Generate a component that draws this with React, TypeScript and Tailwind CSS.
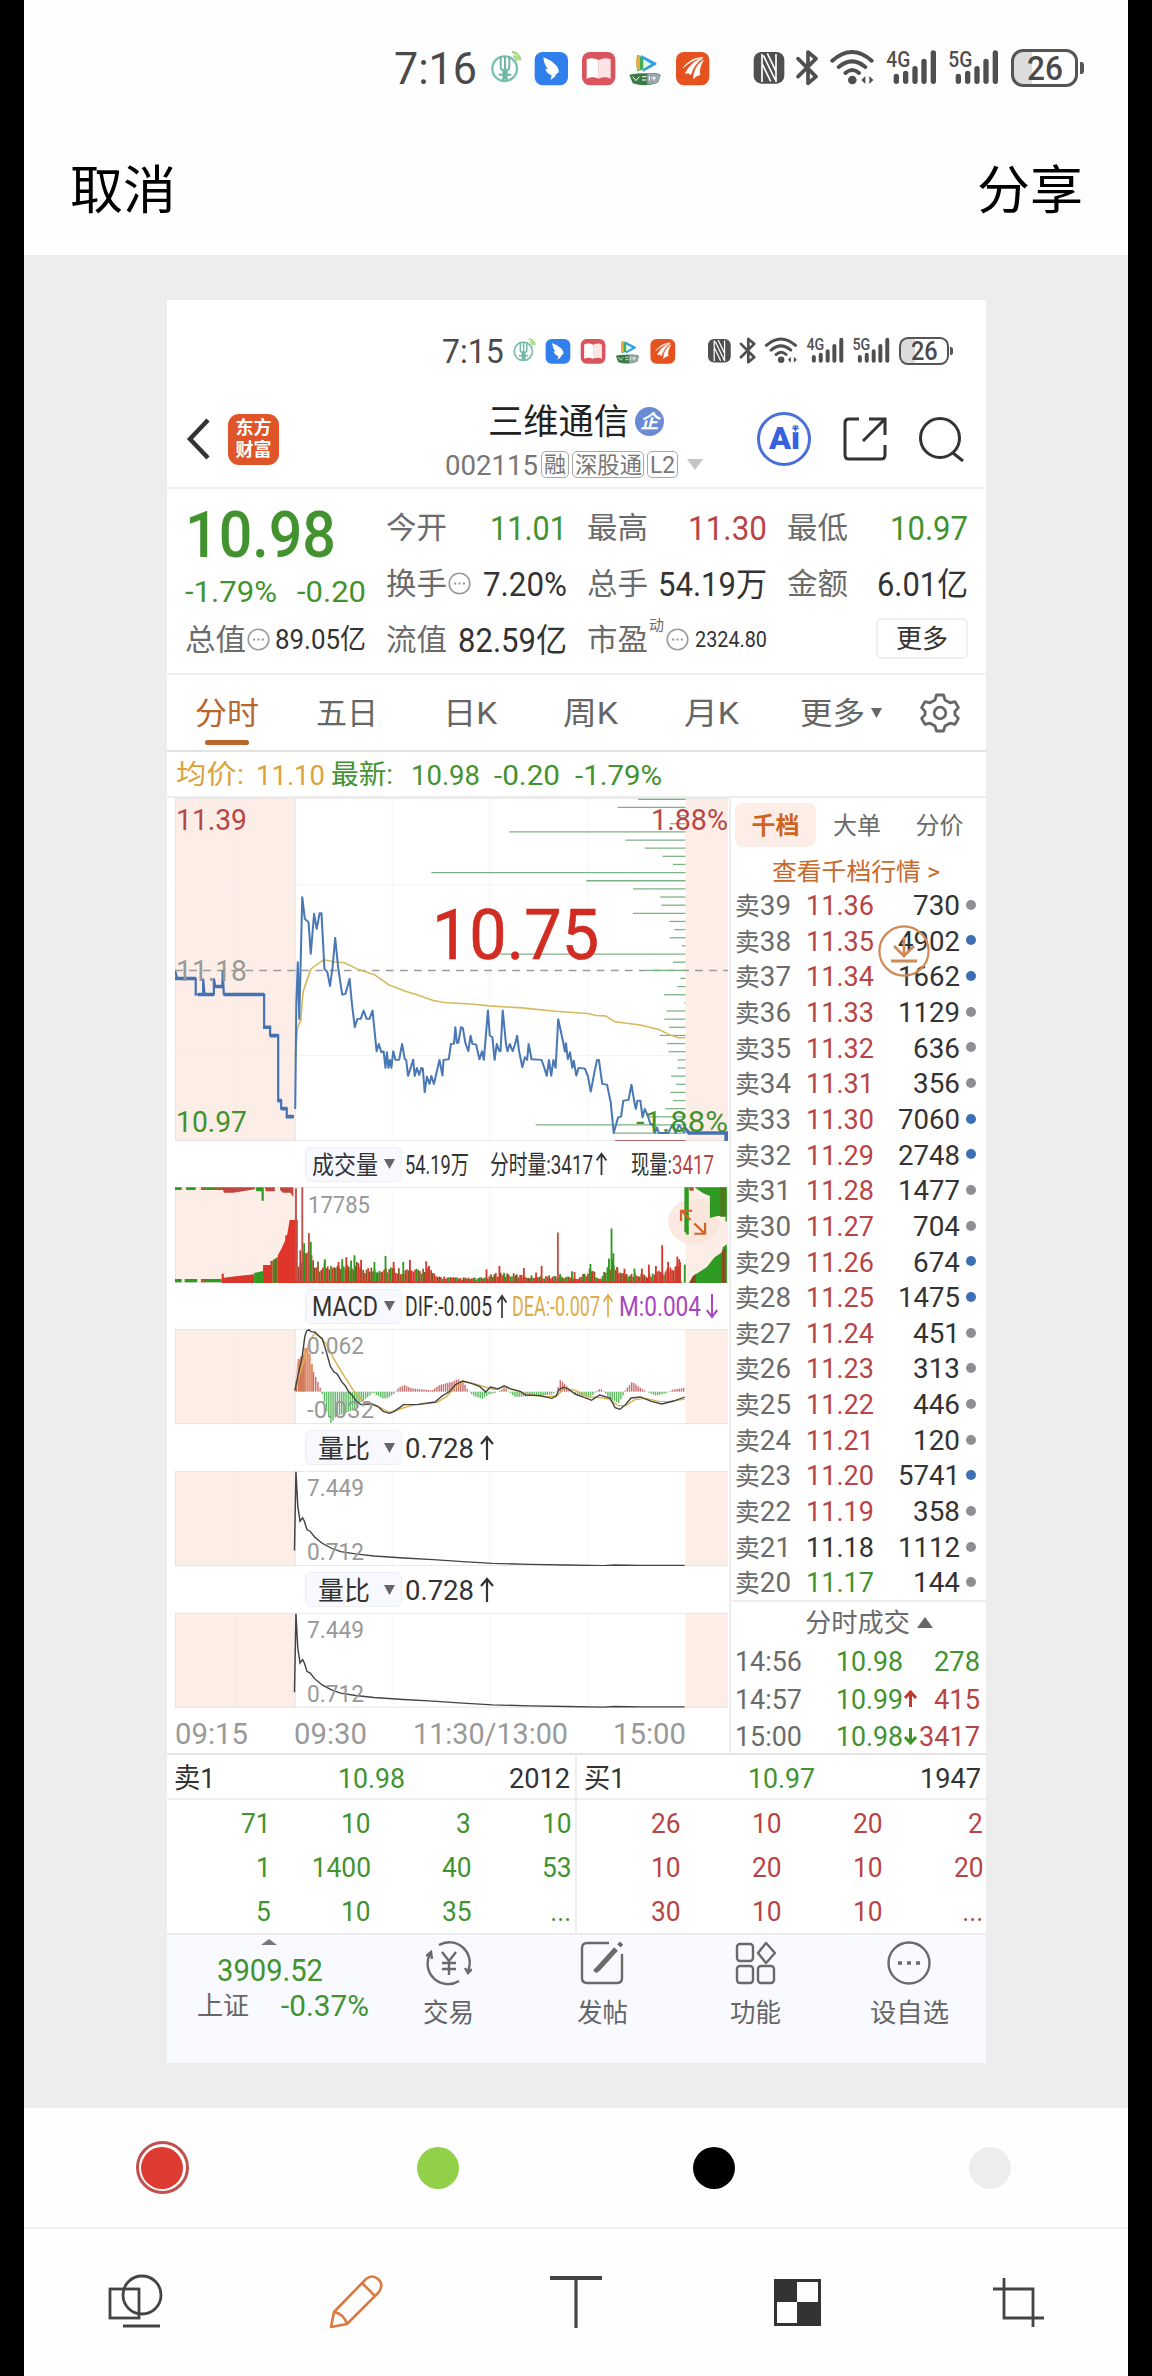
import React, { useLayoutEffect, useRef, useState } from "react";

/* Text squeezed or stretched horizontally to the width of its box. */
function Fit({ className, children }: { className: string; children: React.ReactNode }) {
  const outer = useRef<HTMLSpanElement>(null);
  const inner = useRef<HTMLSpanElement>(null);
  const [scale, setScale] = useState(1);
  useLayoutEffect(() => {
    if (!outer.current || !inner.current) return;
    const o = parseFloat(getComputedStyle(outer.current).width);
    const i = parseFloat(getComputedStyle(inner.current).width);
    if (i > 0) setScale(o / i);
  }, [children]);
  return (
    <span ref={outer} className={`block shrink-0 ${className}`}>
      <span ref={inner} className="inline-block origin-left pt-[0.08em] whitespace-nowrap" style={{ transform: `scaleX(${scale})` }}>
        {children}
      </span>
    </span>
  );
}

function StatusBar({ time }: { time: string }) {
  return (
    <div className="flex h-[50px] items-center text-[#4a4a4a]">
      <Fit className="mb-[3px] ml-[370px] w-[83px] text-[45px]">{time}</Fit>
      <svg className="ml-[7px] h-[48px] w-[230px]" viewBox="0 0 690 144">
        <circle cx="62" cy="74" r="37" fill="none" stroke="#7cc0b0" strokeWidth="7" />
        <path d="M50 36v34q0 8 8 8v32M76 36v34q0 8-8 8v32M63 36v70M44 92h38" fill="none" stroke="#6fb8a6" strokeWidth="6" />
        <path d="M84 24q16 0 26 24M88 36q10 2 12 14" fill="none" stroke="#a5dc7c" strokeWidth="8" />
        <rect x="152" y="24" width="100" height="100" rx="24" fill="#2f80ec" />
        <path d="M178 40q22 8 34 20 16 14 11 26l-9 6 1 4-15 12 3-14q-16-6-19-20l8 2q-12-14-14-36z" fill="#fff" />
        <rect x="294" y="24" width="100" height="100" rx="24" fill="#d9545c" />
        <path d="M308 46q18-8 36 2v56q-18-8-36 0z" fill="#fff" />
        <path d="M380 46q-18-8-36 2v56q18-8 36 0z" fill="#fbe4e4" />
        <path d="M460 32q-6 24 0 50l34-10 22-14z" fill="#3fae55" />
        <path d="M458 40q-4 18 2 36l8 4V34z" fill="#f2a93a" />
        <path d="M470 32l46 24q4 4 0 6l-40 22q10-24-6-52z" fill="#2f9fe8" />
        <path d="M478 46l24 14-24 14z" fill="#e8ffe0" />
        <path d="M436 92q20-6 48-4 40-4 46 6l-8 22q-40 14-76 2z" fill="#3d7a45" />
        <path d="M490 88q30-2 40 6l-8 22-32 6z" fill="#98a6ac" />
        <path d="M446 98l10 12 10-12m8 0h14m-14 10h14m8-12v14m14-14v14m-8-8h14" fill="none" stroke="#fff" strokeWidth="3" />
        <rect x="576" y="24" width="100" height="100" rx="24" fill="#e5511f" />
        <path d="M597 72q22-30 58-32-34 8-58 32zM604 88q18-36 52-46-26 18-36 50-6-8-16-4zM628 104q2-36 30-56-16 30-10 44-10 2-20 12z" fill="#fff" stroke="#fff" strokeWidth="2" />
      </svg>
      <svg className="ml-[37px] h-[48px] w-[250px]" viewBox="803 0 750 144">
        <rect x="811" y="24" width="92" height="95" rx="24" fill="#4f4f4f" />
        <path d="M836 30v84M878 30v84M840 34l36 74M852 28l26 54M836 58l26 54" stroke="#fff" strokeWidth="5" fill="none" />
        <path d="M944 44l54 54-24 20V24l24 20-54 54" fill="none" stroke="#4f4f4f" strokeWidth="11" strokeLinejoin="round" strokeLinecap="round" />
        <g fill="none" stroke="#4f4f4f" strokeWidth="12" strokeLinecap="round">
          <path d="M1047 50q59-52 118 0" />
          <path d="M1066 69q40-34 80 0" />
          <path d="M1086 87q21-18 41 0" />
        </g>
        <circle cx="1107" cy="108" r="13" fill="#4f4f4f" />
        <path d="M1134 108l12-12v24zM1170 108l-12-12v24z" fill="#4f4f4f" />
        {[0, 186].map((dx) => (
          <g key={dx} stroke="#4f4f4f" strokeWidth="16" strokeLinecap="round">
            <path d={`M${1239 + dx} 97V112M${1267 + dx} 88V112M${1295 + dx} 74V112M${1322 + dx} 52V112M${1350 + dx} 27V112`} />
          </g>
        ))}
        <text x="1209" y="68" fontSize="66" fontWeight="500" textLength="72" lengthAdjust="spacingAndGlyphs" fill="#4f4f4f">4G</text>
        <text x="1395" y="68" fontSize="66" fontWeight="500" textLength="72" lengthAdjust="spacingAndGlyphs" fill="#4f4f4f">5G</text>
      </svg>
      <div className="ml-[10px] flex h-[38px] w-[67px] items-center justify-center rounded-[12px] border-[3px] border-[#555] bg-linear-to-r from-[#dcdcdc] from-30% to-white to-30%">
        <Fit className="mb-[2px] w-[36px] text-[34px] font-medium">26</Fit>
      </div>
      <div className="ml-[2px] h-[12px] w-[4px] rounded-r-[3px] bg-[#555]" />
    </div>
  );
}

function Dots({ className }: { className: string }) {
  return (
    <svg className={`size-[23px] shrink-0 ${className}`} viewBox="0 0 23 23" fill="none" stroke="#9a9a9a">
      <circle cx="11.5" cy="11.5" r="10.3" strokeWidth="1.6" />
      <path d="M6 11.5h2.2M10.4 11.5h2.2M14.8 11.5H17" strokeWidth="2.2" />
    </svg>
  );
}

function Quote() {
  return (
    <div className="grid h-[186px] grid-cols-4 gap-x-5 border-b-2 border-[#f0f0f0] pt-[10px] pr-[18px] pl-[18px] text-[30px] text-[#6b6b6b]">
      <div>
        <div className="flex h-[72px] items-center pb-[4px]"><Fit className="w-[151px] text-[65px] font-medium text-[#42932f]">10.98</Fit></div>
        <div className="flex h-[40px] items-center justify-between text-[#42932f]">
          <Fit className="w-[92px]">-1.79%</Fit>
          <Fit className="w-[69px]">-0.20</Fit>
        </div>
        <div className="flex h-[56px] items-center">
          <Fit className="w-[61px]">总值</Fit><Dots className="ml-[1px]" />
          <Fit className="ml-auto w-[91px] text-[28px] text-[#333]">89.05亿</Fit>
        </div>
      </div>
      <div>
        <div className="flex h-[56px] items-center justify-between"><Fit className="w-[61px]">今开</Fit><Fit className="w-[77px] text-[33px] text-[#42932f]">11.01</Fit></div>
        <div className="flex h-[56px] items-center"><Fit className="w-[61px]">换手</Fit><Dots className="ml-[1px]" /><Fit className="ml-auto w-[84px] text-[33px] text-[#333]">7.20%</Fit></div>
        <div className="flex h-[56px] items-center justify-between"><Fit className="w-[61px]">流值</Fit><Fit className="w-[109px] text-[33px] text-[#333]">82.59亿</Fit></div>
      </div>
      <div>
        <div className="flex h-[56px] items-center justify-between"><Fit className="w-[61px]">最高</Fit><Fit className="w-[79px] text-[33px] text-[#b84545]">11.30</Fit></div>
        <div className="flex h-[56px] items-center justify-between"><Fit className="w-[61px]">总手</Fit><Fit className="w-[109px] text-[33px] text-[#333]">54.19万</Fit></div>
        <div className="flex h-[56px] items-center">
          <Fit className="w-[61px]">市盈</Fit>
          <Fit className="mb-[28px] ml-[1px] w-[15px] text-[16px]">动</Fit>
          <Dots className="ml-[2px]" />
          <Fit className="ml-auto w-[72px] text-[22px] text-[#333]">2324.80</Fit>
        </div>
      </div>
      <div>
        <div className="flex h-[56px] items-center justify-between"><Fit className="w-[61px]">最低</Fit><Fit className="w-[78px] text-[33px] text-[#42932f]">10.97</Fit></div>
        <div className="flex h-[56px] items-center justify-between"><Fit className="w-[61px]">金额</Fit><Fit className="w-[91px] text-[33px] text-[#333]">6.01亿</Fit></div>
        <div className="flex h-[54px] items-center justify-end">
          <div className="flex h-[41px] w-[92px] items-center justify-center rounded-[5px] border-2 border-[#f0f0f0] text-[#333]"><Fit className="w-[52px] text-[26px]">更多</Fit></div>
        </div>
      </div>
    </div>
  );
}

const PRICE =
  "367,955 370,640 374,515 378,685 386,320 393,385 403,395 409,490 418,370 425,415 433,368 438,368 446,535 454,545 461,587 468,530 475,442 483,530 494,612 503,610 514,565 520,637 528,710 535,685 544,685 552,660 560,685 568,685 576,660 587,782 593,760 600,785 606,782 611,832 615,785 619,832 623,808 627,832 632,782 638,808 648,808 656,760 663,805 667,808 672,856 679,832 686,807 690,856 696,832 702,853 708,832 712,834 717,905 723,858 730,880 735,856 742,880 750,842 757,808 765,855 768,808 782,806 788,760 796,760 800,710 804,757 808,757 815,710 820,712 827,757 835,782 841,735 846,760 856,762 865,806 872,782 877,808 888,660 893,735 900,740 906,808 912,760 918,780 922,782 928,660 937,762 941,782 947,760 955,782 962,758 967,735 972,780 981,830 988,800 994,808 998,760 1006,806 1033,808 1040,830 1047,856 1053,808 1059,856 1065,808 1071,832 1078,686 1092,758 1096,783 1099,758 1104,806 1110,785 1116,832 1120,810 1127,855 1133,832 1150,834 1158,856 1166,903 1175,850 1183,808 1188,808 1197,880 1210,882 1220,935 1228,1027 1240,980 1248,978 1254,930 1268,928 1276,882 1284,935 1288,955 1292,930 1300,930 1306,980 1312,955 1320,975 1328,1002 1334,1000 1339,1027 1345,1010 1350,1027 1376,1027 1386,1003 1396,1027 1404,1003 1420,1027";
const AVERAGE =
  "367,800 373,712 382,690 388,605 400,565 410,535 425,522 445,508 470,514 500,517 540,538 580,552 620,583 665,602 700,614 740,630 770,636 850,641 890,646 980,652 1070,662 1158,669 1180,675 1205,676 1232,694 1300,703 1350,717 1380,733 1405,742 1422,741";
const PRE_OPEN =
  "42,540 48,564 98,564 98,612 104,612 118,612 118,564 122,612 147,612 147,564 151,588 170,588 171,540 174,612 283,612 283,710 299,710 299,735 321,735 321,930 329,930 329,954 344,954 344,978 363,978";
const DEPTH = [
  1294, 1238, 1400, 1380, 945, 1260, 1312, 1360, 1388, 735, 1154, 1280, 1354, 1357, 1280, 1379, 1392, 1379, 1412, 920, 1388,
  1316, 1408, 1400, 1364, 1419, 1371, 1365, 1378, 1352, 1372, 1376, 1401, 1400, 1383, 1397, 1381, 1388, 1367, 1320, 1017, 1230,
];
const GRID_X = [207, 629, 893, 1158];

function ChartFrame({ top, bottom }: { top: number; bottom: number }) {
  return (
    <g>
      <rect x="42" y={top} width="326" height={bottom - top} fill="#fceee7" />
      <rect x="1422" y={top} width="116" height={bottom - top} fill="#fceee7" />
      {GRID_X.map((x) => (
        <path key={x} d={`M${x} ${top}V${bottom}`} stroke={x === 207 ? "#f4e8e4" : "#efeff2"} strokeWidth="2" />
      ))}
      <path d={`M42 ${top + 1}H1537M42 ${bottom - 1}H1537M43 ${top}V${bottom}M367 ${top}V${bottom}`} stroke="#e4dfe0" strokeWidth="2.5" fill="none" />
    </g>
  );
}

function PriceChart() {
  return (
    <div className="relative h-[343px] w-[553px] text-[30px]">
      <svg className="block size-full" viewBox="42 23 1495 1028" preserveAspectRatio="none">
        <ChartFrame top={23} bottom={1051} />
        <path d="M42 284H1422M42 795H1422" stroke="#efeff2" strokeWidth="2" />
        <path d="M42 540H1537" stroke="#9a9a9a" strokeWidth="4.5" strokeDasharray="21 17" />
        {DEPTH.map((x, i) => (
          <path key={i} d={`M${x} ${27 + i * 24.4}H1422`} stroke="#7db284" strokeWidth="3.8" />
        ))}
        <path d="M1232 1050H1422" stroke="#b5656a" strokeWidth="4" />
        <polyline points={AVERAGE} fill="none" stroke="#d6b85e" strokeWidth="4.6" />
        <polyline points={PRE_OPEN} fill="none" stroke="#4672b4" strokeWidth="6" />
        <path d="M42 564H98M104 612H147M147 588H172M174 612H283M280 710H302M299 735H323M319 930H331M329 954H346M342 978H363" stroke="#4672b4" strokeWidth="11" />
        <polyline points={PRICE} fill="none" stroke="#4a78b5" strokeWidth="5.5" strokeLinejoin="round" />
        <path d="M1420 1012L1432 1027H1532V1051" stroke="#4672b4" strokeWidth="10" fill="none" />
      </svg>
      <span className="absolute top-[5px] left-[1px] text-[#b84545]"><Fit className="w-[71px]">11.39</Fit></span>
      <span className="absolute top-[156px] left-[1px] text-[#999]"><Fit className="w-[71px]">11.18</Fit></span>
      <span className="absolute top-[307px] left-[1px] text-[#42932f]"><Fit className="w-[71px]">10.97</Fit></span>
      <span className="absolute top-[5px] right-0 text-[#b84545]"><Fit className="w-[77px]">1.88%</Fit></span>
      <span className="absolute top-[307px] right-0 text-[#42932f]"><Fit className="w-[92px]">-1.88%</Fit></span>
      <span className="absolute top-[96px] left-[257px] text-[70px] text-[#d02c22] [-webkit-text-stroke:0.6px_#d02c22]"><Fit className="w-[167px]">10.75</Fit></span>
    </div>
  );
}

function IndicatorRow({ name, nameClass, className, children }: { name: string; nameClass: string; className: string; children: React.ReactNode }) {
  return (
    <div className={`flex items-center pl-[130px] text-[#333] ${className}`}>
      <div className="flex h-[35px] w-[97px] shrink-0 items-center justify-between rounded-[6px] border border-[#eeeff5] bg-[#f8f9fe] pr-[6px] pl-[6px]">
        <Fit className={nameClass}>{name}</Fit>
        <svg className="h-[10px] w-[11px]" viewBox="0 0 11 10"><path d="M0 0h11L5.5 10z" fill="#666" /></svg>
      </div>
      {children}
    </div>
  );
}

/* Volume bars: [x, height, colour]; heights follow an envelope plus a few spikes. */
const RED = "#d9362b";
const GREEN = "#2f9a22";
const OLIVE = "#7a5a1c";
const ENVELOPE: [number, number][] = [
  [374, 80], [392, 110], [412, 80], [430, 55], [470, 48], [500, 45], [530, 55], [560, 42], [600, 48], [640, 42], [700, 36],
  [720, 48], [745, 20], [800, 14], [870, 14], [920, 30], [990, 20], [1070, 20], [1130, 16], [1165, 40], [1190, 14], [1220, 62],
  [1250, 28], [1320, 24], [1350, 36], [1375, 40], [1405, 60], [1410, 55],
];
const SPIKES: [number, number, string][] = [
  [369, 282, "#c0504a"], [386, 285, "#c0504a"], [404, 148, "#c0504a"], [409, 122, GREEN], [391, 118, GREEN], [447, 70, GREEN], [484, 62, RED],
  [494, 70, GREEN], [505, 76, RED], [518, 66, GREEN], [527, 82, GREEN], [545, 68, RED], [581, 62, GREEN], [611, 80, GREEN], [633, 62, RED],
  [659, 62, GREEN], [677, 68, RED], [721, 64, RED], [729, 50, RED], [884, 40, RED], [919, 50, RED], [932, 28, GREEN], [985, 44, RED], [1033, 50, RED],
  [1018, 30, RED], [1077, 150, "#c0504a"], [1083, 26, GREEN], [1115, 34, GREEN], [1122, 32, RED], [1165, 56, GREEN], [1215, 72, GREEN], [1222, 162, GREEN],
  [1227, 88, GREEN], [1238, 44, RED], [1257, 42, RED], [1284, 42, GREEN], [1304, 42, RED], [1323, 54, RED], [1342, 50, RED], [1359, 112, RED],
  [1375, 62, RED], [1400, 78, RED], [1405, 70, RED], [1420, 54, GREEN],
];

function envelopeAt(x: number) {
  for (let i = 1; i < ENVELOPE.length; i++) {
    const [x0, h0] = ENVELOPE[i - 1];
    const [x1, h1] = ENVELOPE[i];
    if (x <= x1) return h0 + ((h1 - h0) * (x - x0)) / (x1 - x0);
  }
  return 40;
}

const VOLUME = Array.from({ length: 237 }, (_, i) => {
  const x = 374 + i * 4.37;
  const r = Math.abs(Math.sin(i * 12.9898) * 43758.5453) % 1;
  const c = Math.abs(Math.sin(i * 3.233 + 1) * 1571.33) % 1;
  const late = x > 1330;
  const color = c < (late ? 0.7 : 0.45) ? RED : c < (late ? 0.78 : 0.62) ? GREEN : OLIVE;
  return { x, h: envelopeAt(x) * (0.6 + r * 0.55), color: x < 384 ? "#a8402a" : color };
});

function VolumeChart() {
  return (
    <div className="relative h-[96px] w-[553px]">
      <svg className="block size-full" viewBox="42 141 1495 287" preserveAspectRatio="none">
        <ChartFrame top={141} bottom={428} />
        <path d="M42 146H60M72 146H98M120 146H150" stroke={GREEN} strokeWidth="8" />
        <path d="M112 146H124M148 146H172" stroke="#a85a30" strokeWidth="8" />
        <path d="M170 142H258V148L200 158H174zM284 142H312V154H288z" fill="#c2473f" />
        <path d="M260 142H282V182H276V154H262z" fill={GREEN} />
        <path d="M326 142H362V172L354 158H334L326 150z" fill="#c2473f" />
        <path d="M42 421H60M68 421H102M120 421H168" stroke={GREEN} strokeWidth="10" />
        <path d="M112 421H124" stroke="#a85a30" strokeWidth="10" />
        <path d="M168 428V400H174V412L206 408L256 402V428z" fill={RED} />
        <path d="M256 428V398L280 392V428z" fill={GREEN} />
        <path d="M280 428V374H300V362H306V428z" fill={RED} />
        <path d="M306 428V360L320 350V428z" fill="#5a7a1e" />
        <path d="M320 428V345L330 325L340 300V285H345L352 240H374V428z" fill="#e0352b" />
        {VOLUME.map((b, i) => (
          <rect key={i} x={b.x} y={427 - b.h} width="4.5" height={b.h} fill={b.color} />
        ))}
        {SPIKES.map(([x, h, color]) => (
          <rect key={x} x={x - 2.4} y={427 - h} width="5" height={h} fill={color} />
        ))}
        <path d="M367 426H1412" stroke={RED} strokeWidth="4" />
        <circle cx="1444" cy="244" r="69" fill="#fbe3d8" fillOpacity="0.75" />
        <path d="M1419 142H1431V283H1423V276H1419zM1446 142H1534V244H1530V228H1508L1488 234V168L1470 160z" fill={GREEN} />
        <path d="M1516 142H1531V230H1516z" fill="#4f7a1e" />
        <path d="M1431 142H1444V152H1434z" fill="#b0483c" />
        <path d="M1432 428L1442 408L1450 402L1480 380L1500 352L1522 335V322L1534 312V428z" fill={GREEN} />
        <path d="M1432 428L1442 408L1450 400V428zM1520 428V332L1530 325V428z" fill="#8a4a22" />
        <path d="M1410 243V212H1440M1411 212L1436 240M1446 250L1474 280M1475 248V281H1446" fill="none" stroke="#d0642a" strokeWidth="6" />
      </svg>
      <span className="absolute top-[5px] left-[133px] text-[23px] text-[#999]"><Fit className="w-[62px]">17785</Fit></span>
    </div>
  );
}

/* MACD histogram: [x, value]; positive rises above the zero line. */
const MACD_SHAPE: [number, number][] = [
  [367, 20], [374, 100], [385, 110], [394, 140], [402, 120], [412, 66], [430, 20], [436, 0], [442, -20], [450, -60], [462, -95], [475, -75], [495, -66],
  [520, -56], [545, -30], [570, -8], [576, 0], [582, -8], [600, -20], [615, -20], [632, -6], [636, 0], [645, 12], [660, 20], [680, 10], [718, 6],
  [735, 4], [755, 20], [790, 30], [805, 38], [822, 26], [834, 0], [850, -14], [872, -22], [888, -8], [905, -4], [920, 4], [932, 12], [942, 0],
  [960, -16], [990, -14], [1030, -12], [1060, -8], [1072, 0], [1082, 36], [1095, 22], [1110, 4], [1125, -12], [1165, -14], [1178, 0], [1190, 10], [1200, 0],
  [1215, -20], [1240, -34], [1252, -10], [1258, 6], [1276, 30], [1295, 14], [1315, 0], [1340, -12], [1370, -4], [1385, 6], [1420, 12],
];
const MACD_BARS = Array.from({ length: 180 }, (_, i) => {
  const x = 368 + i * 5.85;
  for (let k = 1; k < MACD_SHAPE.length; k++) {
    const [x0, v0] = MACD_SHAPE[k - 1];
    const [x1, v1] = MACD_SHAPE[k];
    if (x <= x1) return { x, v: v0 + ((v1 - v0) * (x - x0)) / (x1 - x0) };
  }
  return { x, v: 0 };
});

function MacdChart() {
  return (
    <div className="relative h-[95px] w-[553px] text-[23px] text-[#999]">
      <svg className="block size-full" viewBox="42 568 1495 285" preserveAspectRatio="none">
        <ChartFrame top={568} bottom={853} />
        {MACD_BARS.map(({ x, v }) => (
          <rect key={x} x={x} y={v > 0 ? 756 - v : 756} width={v > 60 ? 5.8 : 3.8} height={Math.abs(v)} fill={v > 60 ? "#e08a68" : v > 0 ? "#c96c6a" : "#5fba64"} />
        ))}
        <path d="M366 754L372 660L382 700L394 640V756z" fill="#c0563a" fillOpacity="0.35" />
        <polyline points="367,750 376,715 390,665 405,605 420,580 432,590 450,612 475,665 500,710 520,745 535,768 552,785 575,795 600,805 622,818 650,808 680,798 720,792 750,788 775,772 800,742 825,726 850,732 880,742 905,750 930,742 960,752 1000,764 1040,772 1075,768 1095,746 1125,752 1160,772 1190,774 1215,778 1240,798 1260,798 1285,780 1315,776 1350,785 1380,786 1420,778" fill="none" stroke="#ddb04a" strokeWidth="4" />
        <polyline points="366,753 376,700 386,650 393,590 398,574 404,570 410,576 420,577 430,588 440,597 450,632 462,680 472,697 480,702 492,725 502,738 512,757 522,768 532,784 545,795 575,793 590,800 605,815 622,821 635,815 660,795 700,794 745,787 765,768 785,755 800,735 820,724 845,732 865,740 882,757 895,742 915,748 932,738 950,748 975,755 990,766 1030,768 1060,776 1072,770 1080,750 1092,743 1105,748 1125,764 1150,774 1168,782 1190,766 1218,775 1232,804 1245,809 1260,795 1275,775 1300,772 1330,785 1358,793 1390,784 1420,772" fill="none" stroke="#444" strokeWidth="4" />
      </svg>
      <span className="absolute top-[4px] left-[132px]"><Fit className="w-[57px]">0.062</Fit></span>
      <span className="absolute top-[68px] left-[132px]"><Fit className="w-[67px]">-0.032</Fit></span>
    </div>
  );
}

function RatioBlock({ chartClass }: { chartClass: string }) {
  return (
    <div>
      <IndicatorRow name="量比" className="h-[47px]" nameClass="ml-[6px] w-[52px] text-[26px]">
        <Fit className="ml-[3px] w-[69px] text-[28px]">0.728</Fit>
        <Arrow className="ml-[5px] h-[26px] w-[16px] text-[#333]" />
      </IndicatorRow>
      <div className={`relative w-[553px] text-[23px] text-[#999] ${chartClass}`}>
        <svg className="block size-full" viewBox="42 154 1495 284" preserveAspectRatio="none">
          <ChartFrame top={154} bottom={438} />
          <polyline points="365,392 369,156 374,260 380,304 387,294 392,305 399,330 407,334 420,352 440,370 465,385 490,395 530,402 580,408 660,414 740,419 820,425 900,430 1000,433 1100,435 1200,437 1230,435 1300,436 1420,436" fill="none" stroke="#444" strokeWidth="4" />
        </svg>
        <span className="absolute top-[4px] left-[132px]"><Fit className="w-[57px]">7.449</Fit></span>
        <span className="absolute top-[68px] left-[132px]"><Fit className="w-[57px]">0.712</Fit></span>
      </div>
    </div>
  );
}

function Arrow({ className, down }: { className: string; down?: boolean }) {
  return (
    <svg className={`shrink-0 ${className}`} viewBox="0 0 16 26" preserveAspectRatio="none" fill="none" stroke="currentColor" strokeWidth="2.2">
      {down ? <path d="M8 1v23M2 17l6 7 6-7" /> : <path d="M8 25V2M2 9l6-7 6 7" />}
    </svg>
  );
}

const ASKS: [number, string, number, boolean][] = [
  [39, "11.36", 730, false], [38, "11.35", 4902, true], [37, "11.34", 1662, true], [36, "11.33", 1129, false], [35, "11.32", 636, false],
  [34, "11.31", 356, false], [33, "11.30", 7060, true], [32, "11.29", 2748, true], [31, "11.28", 1477, false], [30, "11.27", 704, false],
  [29, "11.26", 674, true], [28, "11.25", 1475, true], [27, "11.24", 451, false], [26, "11.23", 313, false], [25, "11.22", 446, false],
  [24, "11.21", 120, false], [23, "11.20", 5741, true], [22, "11.19", 358, false], [21, "11.18", 1112, false], [20, "11.17", 144, false],
];

function OrderBook() {
  return (
    <div className="relative flex w-[257px] flex-col border-l-2 border-[#ededed] text-[#6b6b6b]">
      <div className="flex shrink-0 pt-[5px] pl-[4px] text-[24px]">
        <div className="flex h-[44px] w-[81px] items-center justify-center rounded-[8px] bg-[#fceee7] pt-[2px] font-bold text-[#d0641f]">千档</div>
        <div className="flex w-[82px] items-center justify-center pt-[2px]">大单</div>
        <div className="flex w-[82px] items-center justify-center pt-[2px] pl-[1px]">分价</div>
      </div>
      <div className="flex h-[40px] shrink-0 items-center justify-center pt-[8px] pr-[6px] text-[24px] text-[#c8692a]"><Fit className="w-[168px]">查看千档行情 &gt;</Fit></div>
      {ASKS.map(([n, price, vol, big]) => (
        <div key={n} className="flex h-[35.66px] shrink-0 items-center pl-[4px] text-[28px]">
          <Fit className="w-[56px]"><span className="text-[25px]">卖</span>{n}</Fit>
          <Fit className={`ml-[15px] w-[68px] ${n > 21 ? "text-[#b84545]" : n === 21 ? "text-[#333]" : "text-[#42932f]"}`}>{price}</Fit>
          <Fit className={`ml-auto text-[#333] ${vol > 999 ? "w-[62px]" : "w-[47px]"}`}>{vol}</Fit>
          <span className={`mr-[10px] ml-[6px] size-[10px] rounded-full ${big ? "bg-[#3d6fb4]" : "bg-[#8f8f93]"}`} />
        </div>
      ))}
      <div className="flex h-[42px] shrink-0 items-center border-t-2 border-[#ededed] pl-[74px] text-[26px]">
        <Fit className="w-[105px]">分时成交</Fit>
        <svg className="ml-[7px] h-[11px] w-[16px]" viewBox="0 0 16 11"><path d="M0 11h16L8 0z" fill="#666" /></svg>
      </div>
      {[
        ["14:56", "10.98", "278", ""],
        ["14:57", "10.99", "415", "up"],
        ["15:00", "10.98", "3417", "down"],
      ].map(([t, p, v, dir]) => (
        <div key={t} className="flex h-[37.6px] shrink-0 items-center pr-[6px] pl-[4px] text-[28px]">
          <Fit className="w-[67px]">{t}</Fit>
          <Fit className="ml-[34px] w-[67px] text-[#42932f]">{p}</Fit>
          <span className="ml-[1px] w-[14px]">
            {dir && (
              <svg className={`h-[17px] w-[13px] ${dir === "up" ? "text-[#c03a30]" : "text-[#42932f]"}`} viewBox="0 0 13 17" fill="none" stroke="currentColor" strokeWidth="3">
                {dir === "up" ? <path d="M6.5 17V2M1 8l5.500-6 5.500 6" /> : <path d="M6.500 0v15M1 9l5.500 6 5.500-6" />}
              </svg>
            )}
          </span>
          <Fit className={`ml-auto ${dir ? "text-[#b84545]" : "text-[#42932f]"} ${v.length > 3 ? "w-[61px]" : "w-[46px]"}`}>{v}</Fit>
        </div>
      ))}
      <svg className="absolute top-[127px] left-[147px] size-[52px]" viewBox="0 0 52 52" fill="none" stroke="#cf8a55" strokeWidth="2.2">
        <circle cx="26" cy="26" r="24.600" />
        <path d="M26 12v18M16 21l10 10 10-10M13 36h26" strokeWidth="2.800" />
      </svg>
    </div>
  );
}

function DepthSide({ label, price, total, rows, color }: { label: string; price: string; total: string; rows: string[][]; color: string }) {
  return (
    <div className="w-1/2 text-[28px] odd:border-r-2 odd:border-[#ededed]">
      <div className="flex h-[45px] items-center border-b-2 border-[#f0f0f0] pt-[2px] pr-[5px] pl-[7px] text-[#333]">
        <Fit className="w-[41px]">{label}</Fit>
        <Fit className="ml-[123px] w-[67px] text-[#42932f]">{price}</Fit>
        <Fit className="ml-auto w-[61px]">{total}</Fit>
      </div>
      {rows.map((row, i) => (
        <div key={i} className={`grid h-[44.3px] grid-cols-4 items-center pt-[3px] pr-[3px] pl-[3px] text-right ${color}`}>
          {row.map((v, k) => (
            <span key={k} className="flex justify-end">
              <span className="inline-block origin-right scale-x-[0.94]">{v}</span>
            </span>
          ))}
        </div>
      ))}
    </div>
  );
}

function NavItem({ label, labelClass, children }: { label: string; labelClass: string; children: React.ReactNode }) {
  return (
    <div className="flex w-[153.6px] flex-col items-center pt-[5px] text-[26px] text-[#666]">
      <svg className="size-[46px]" viewBox="0 0 46 46" fill="none" stroke="#6a6a6a" strokeWidth="2.4">{children}</svg>
      <div className="mt-[12px]"><Fit className={labelClass}>{label}</Fit></div>
    </div>
  );
}

function StockShot() {
  return (
    <div className="ml-[143px] flex h-[1763px] w-[819px] flex-col bg-white">
      <div className="flex h-[102px] shrink-0 items-center">
        <div className="[zoom:0.742]"><StatusBar time="7:15" /></div>
      </div>
      <div className="flex h-[87px] shrink-0 border-b-2 border-[#f0f0f0]">
        <div className="flex h-[74px] items-center">
          <svg className="ml-[19px] h-[42px] w-[24px]" viewBox="0 0 24 42" fill="none" stroke="#333" strokeWidth="4.500"><path d="M22 2L4 21l18 19" /></svg>
          <div className="ml-[18px] flex h-[51px] w-[51px] flex-col items-center justify-center rounded-[11px] bg-[#e0542a] text-[18px] leading-[22px] font-bold text-white">
            <span>东方</span><span>财富</span>
          </div>
        </div>
        <div className="ml-[166px] w-[258px]">
          <div className="flex h-[38px] items-center pl-[43px] text-[35px] text-[#222]">
            <Fit className="w-[141px]">三维通信</Fit>
            <div className="ml-[6px] flex size-[29px] items-center justify-center rounded-full bg-[#6b8bd6] text-[19px] font-bold text-white italic">企</div>
          </div>
          <div className="mt-[11px] flex h-[27px] items-center text-[28px] text-[#777]">
            <Fit className="w-[93px]">002115</Fit>
            <div className="ml-[3px] flex h-[27px] w-[28px] items-center justify-center rounded-[5px] border-[1.5px] border-[#a8a8a8] text-[22px]"><Fit className="w-[22px]">融</Fit></div>
            <div className="ml-[3px] flex h-[27px] w-[72px] items-center justify-center rounded-[5px] border-[1.5px] border-[#a8a8a8] text-[23px]"><Fit className="w-[67px]">深股通</Fit></div>
            <div className="ml-[3px] flex h-[27px] w-[31px] items-center justify-center rounded-[5px] border-[1.5px] border-[#a8a8a8] text-[24px]"><Fit className="w-[25px]">L2</Fit></div>
            <svg className="ml-[9px] h-[11px] w-[16px]" viewBox="0 0 16 11"><path d="M0 0h16L8 11z" fill="#c4c4c4" /></svg>
          </div>
        </div>
        <div className="flex h-[74px] items-center">
          <div className="relative ml-[54px] flex size-[54px] items-center justify-center rounded-full border-[3px] border-[#4a6fd8] text-[#3563e0]">
            <Fit className="mb-[3px] w-[31px] text-[31px] font-black">Ai</Fit>
            <svg className="absolute top-[9px] right-[8px] size-[9px]" viewBox="0 0 9 9"><path d="M4.500 0l1.200 3.300L9 4.500 5.700 5.700 4.500 9 3.300 5.700 0 4.500l3.300-1.200z" fill="#3563e0" stroke="#fff" strokeWidth="0.500" /></svg>
          </div>
          <svg className="ml-[32px] size-[44px]" viewBox="0 0 44 44" fill="none" stroke="#333" strokeWidth="3">
            <path d="M16 2H6Q2 2 2 6v32q0 4 4 4h32q4 0 4-4V28M26 2h16v16M42 2L20 24" />
          </svg>
          <svg className="ml-[32px] size-[46px]" viewBox="0 0 46 46" fill="none" stroke="#333" strokeWidth="3">
            <circle cx="21" cy="22" r="19.500" /><path d="M34 37l10 8" />
          </svg>
        </div>
      </div>
      <div className="shrink-0"><Quote /></div>
      <div className="flex h-[77px] shrink-0 items-center border-b-2 border-[#e2e2e2] text-[31px] text-[#666]">
        <div className="relative ml-[28px] flex h-full items-center text-[#b8652f]">
          <Fit className="w-[64px]">分时</Fit>
          <span className="absolute bottom-[5px] left-[10px] h-[5px] w-[44px] rounded-full bg-[#b8652f]" />
        </div>
        <Fit className="ml-[57px] w-[62px]">五日</Fit>
        <Fit className="ml-[65px] w-[54px]">日K</Fit>
        <Fit className="ml-[66px] w-[55px]">周K</Fit>
        <Fit className="ml-[66px] w-[55px]">月K</Fit>
        <Fit className="ml-[61px] w-[65px]">更多</Fit>
        <svg className="ml-[6px] h-[10px] w-[11px]" viewBox="0 0 11 10"><path d="M0 0h11L5.500 10z" fill="#666" /></svg>
        <svg className="ml-[38px] size-[40px]" viewBox="0 0 40 40" fill="none" stroke="#666" strokeWidth="2.800" strokeLinejoin="round">
          <path d="M16.500 2h7l1.500 5 5 2.800 5-1.200 3.400 6-3.500 3.800v3.200l3.500 3.800-3.400 6-5-1.200-5 2.800-1.500 5h-7L15 33l-5-2.800-5 1.200-3.400-6 3.500-3.800v-3.200l-3.500-3.800 3.400-6 5 1.200L15 7z" />
          <circle cx="20" cy="20" r="5.800" />
        </svg>
      </div>
      <div className="flex h-[46px] shrink-0 items-center border-b-2 border-[#ededed] pt-[1px] text-[28px] text-[#42932f]">
        <Fit className="ml-[9px] w-[68px] text-[27px] text-[#dda23e]">均价:</Fit>
        <Fit className="ml-[12px] w-[69px] text-[#dda23e]">11.10</Fit>
        <Fit className="ml-[6px] w-[62px] text-[27px]">最新:</Fit>
        <Fit className="ml-[18px] w-[69px]">10.98</Fit>
        <Fit className="ml-[14px] w-[66px]">-0.20</Fit>
        <Fit className="ml-[15px] w-[87px]">-1.79%</Fit>
      </div>
      <div className="flex h-[957px] shrink-0 border-b-2 border-[#e4e4e4]">
        <div className="w-[562px] pl-[8px]">
          <PriceChart />
          <IndicatorRow name="成交量" className="h-[46px]" nameClass="w-[66px] text-[25px]">
            <Fit className="ml-[3px] w-[64px] text-[26px]">54.19万</Fit>
            <Fit className="ml-[21px] w-[103px] text-[26px]">分时量:3417</Fit>
            <Arrow className="ml-[2px] h-[24px] w-[13px]" />
            <Fit className="ml-[23px] w-[41px] text-[26px]">现量:</Fit>
            <Fit className="w-[42px] text-[26px] text-[#b84545]">3417</Fit>
          </IndicatorRow>
          <VolumeChart />
          <IndicatorRow name="MACD" className="h-[46px]" nameClass="w-[66px] text-[28px]">
            <Fit className="ml-[3px] w-[87px] text-[28px]">DIF:-0.005</Fit>
            <Arrow className="ml-[4px] h-[25px] w-[12px]" />
            <span className="flex items-center text-[#ddab48]">
              <Fit className="ml-[4px] w-[88px] text-[28px]">DEA:-0.007</Fit>
              <Arrow className="ml-[2px] h-[25px] w-[12px]" />
            </span>
            <span className="flex items-center text-[#a845bd]">
              <Fit className="ml-[5px] w-[82px] text-[28px]">M:0.004</Fit>
              <Arrow className="ml-[4px] h-[26px] w-[14px]" down />
            </span>
          </IndicatorRow>
          <MacdChart />
          <RatioBlock chartClass="h-[95px]" />
          <RatioBlock chartClass="h-[94.5px]" />
          <div className="flex h-[50px] items-center text-[30px] text-[#999]">
            <Fit className="w-[73px]">09:15</Fit>
            <Fit className="ml-[46px] w-[73px]">09:30</Fit>
            <Fit className="ml-[46px] w-[155px]">11:30/13:00</Fit>
            <Fit className="ml-[45px] w-[73px]">15:00</Fit>
          </div>
        </div>
        <OrderBook />
      </div>
      <div className="flex shrink-0">
        <DepthSide label="卖1" price="10.98" total="2012" color="text-[#42932f]" rows={[["71", "10", "3", "10"], ["1", "1400", "40", "53"], ["5", "10", "35", "..."]]} />
        <DepthSide label="买1" price="10.97" total="1947" color="text-[#b84545]" rows={[["26", "10", "20", "2"], ["10", "20", "10", "20"], ["30", "10", "10", "..."]]} />
      </div>
      <div className="flex flex-1 border-t-2 border-[#ececf0] bg-[#f8faff]">
        <div className="flex w-[205px] flex-col items-center">
          <svg className="mt-[4px] h-[6px] w-[16px]" viewBox="0 0 16 6"><path d="M0 6h16L8 0z" fill="#777" /></svg>
          <div className="mt-[8px] ml-[1px] text-[31px] text-[#42932f]"><Fit className="w-[106px]">3909.52</Fit></div>
          <div className="mt-[3px] flex items-center pl-[28px] text-[28px] text-[#666]">
            <Fit className="w-[52px] text-[26px]">上证</Fit>
            <Fit className="ml-[32px] w-[88px] text-[29px] text-[#42932f]">-0.37%</Fit>
          </div>
        </div>
        <NavItem label="交易" labelClass="w-[51px]">
          <path d="M13 5A20.500 20.500 0 0 1 42 31M33 41A20.500 20.500 0 0 1 4 14M0 16l5-4 1 7M46 29l-4 4-3-5" />
          <path d="M16 12l7 9 7-9M23 21v14M16 23h14M16 29h14" />
        </NavItem>
        <NavItem label="发帖" labelClass="w-[51px]">
          <path d="M30 3H8Q3 3 3 8v30q0 5 5 5h30q5 0 5-5V14" />
          <path d="M37 9L18 30" strokeWidth="5" /><path d="M40 6l2.500-3M18 29l-2 3" strokeWidth="4.500" />
        </NavItem>
        <NavItem label="功能" labelClass="w-[51px]">
          <rect x="4" y="4" width="16" height="17" rx="3" /><rect x="4" y="26" width="16" height="17" rx="3" />
          <rect x="25" y="26" width="16" height="17" rx="3" /><path d="M33 3l9 10-9 10-8-10z" strokeLinejoin="round" />
        </NavItem>
        <NavItem label="设自选" labelClass="w-[79px]">
          <circle cx="23" cy="23" r="20.500" /><path d="M12 23h4M21 23h4M30 23h4" strokeWidth="3.500" />
        </NavItem>
      </div>
    </div>
  );
}

export default function App() {
  return (
    <div className="flex h-[2376px] w-[1152px] bg-black px-6 font-[Roboto,'Noto_Sans_CJK_SC',sans-serif] leading-none">
      <div className="flex w-[1104px] flex-col overflow-hidden bg-[#fefefe]">
        <div className="pt-[43px]"><StatusBar time="7:16" /></div>
        <div className="flex h-[162px] items-center justify-between pt-[31px] pr-[45px] pb-[0px] pl-[46px] text-[52px] text-black">
          <Fit className="w-[106px]">取消</Fit>
          <Fit className="w-[106px]">分享</Fit>
        </div>
        <div className="h-[1853px] shrink-0 bg-[#ededed] pt-[45px]"><StockShot /></div>
        <div className="flex h-[121px] shrink-0 items-center border-b-2 border-[#f1f1f1]">
          <div className="flex w-[276px] justify-center">
            <div className="flex size-[53px] items-center justify-center rounded-full border-[3px] border-[#c0504c]"><div className="size-[42px] rounded-full bg-[#dd3b31]" /></div>
          </div>
          <div className="flex w-[276px] justify-center"><div className="size-[42px] rounded-full bg-[#92d04a]" /></div>
          <div className="flex w-[276px] justify-center"><div className="size-[42px] rounded-full bg-black" /></div>
          <div className="flex w-[276px] justify-center"><div className="size-[42px] rounded-full bg-[#ededed]" /></div>
        </div>
        <div className="flex flex-1 items-center pb-[1px] pl-[1px]">
          <div className="flex w-[221px] justify-center">
            <svg className="mb-[2px] size-[56px]" viewBox="0 0 56 56" fill="none" stroke="#444" strokeWidth="2.800">
              <rect x="3" y="16" width="29" height="29" /><circle cx="35" cy="22" r="19" /><path d="M16 53h37" strokeWidth="3.200" />
            </svg>
          </div>
          <div className="flex w-[221px] justify-center">
            <svg className="size-[56px]" viewBox="0 0 56 56" fill="none" stroke="#d97a42" strokeWidth="2.600" strokeLinejoin="round">
              <path d="M3 53l3-15L38 5q6-5 12 0t1 13L19 50zM6 38q10 2 13 12M34 9l13 13" />
            </svg>
          </div>
          <div className="flex w-[221px] justify-center">
            <svg className="size-[56px]" viewBox="0 0 56 56" fill="none" stroke="#444"><path d="M2 4h52" strokeWidth="4" /><path d="M28 4v50" strokeWidth="3.200" /></svg>
          </div>
          <div className="flex w-[221px] justify-center">
            <div className="grid size-[47px] grid-cols-2 border-[3px] border-[#333]"><div className="bg-[#333]" /><div /><div /><div className="bg-[#333]" /></div>
          </div>
          <div className="flex w-[221px] justify-center">
            <svg className="size-[54px]" viewBox="0 0 54 54" fill="none" stroke="#444" strokeWidth="2.800"><path d="M13 3v40h40M2 14h40v38" /></svg>
          </div>
        </div>
      </div>
    </div>
  );
}
